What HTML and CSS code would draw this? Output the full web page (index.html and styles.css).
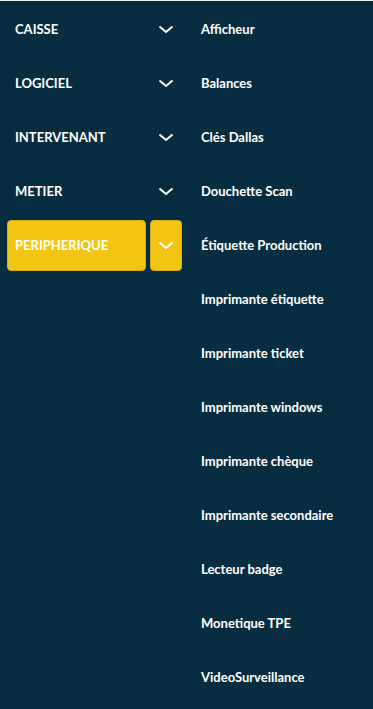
FILE: index.html
```html
<!DOCTYPE html>
<html lang="fr">
<head>
    <meta charset="UTF-8">
    <meta name="viewport" content="width=device-width, initial-scale=1.0">
    <title>Paramètres</title>
    <link rel="stylesheet" href="styles.css">
</head>
<body>

    <div class="menu">
        <ul class="categories">
            <li class="category">
                <span class="category-label">CAISSE</span>
                <span class="toggle"><svg width="16" height="9" viewBox="0 0 16 9"><polyline points="1.5,1.5 8,7 14.5,1.5" fill="none" stroke="#fff" stroke-width="2"/></svg></span>
            </li>
            <li class="category">
                <span class="category-label">LOGICIEL</span>
                <span class="toggle"><svg width="16" height="9" viewBox="0 0 16 9"><polyline points="1.5,1.5 8,7 14.5,1.5" fill="none" stroke="#fff" stroke-width="2"/></svg></span>
            </li>
            <li class="category">
                <span class="category-label">INTERVENANT</span>
                <span class="toggle"><svg width="16" height="9" viewBox="0 0 16 9"><polyline points="1.5,1.5 8,7 14.5,1.5" fill="none" stroke="#fff" stroke-width="2"/></svg></span>
            </li>
            <li class="category">
                <span class="category-label">METIER</span>
                <span class="toggle"><svg width="16" height="9" viewBox="0 0 16 9"><polyline points="1.5,1.5 8,7 14.5,1.5" fill="none" stroke="#fff" stroke-width="2"/></svg></span>
            </li>
            <li class="category active">
                <span class="category-label">PERIPHERIQUE</span>
                <span class="toggle"><svg width="16" height="9" viewBox="0 0 16 9"><polyline points="1.5,1.5 8,7 14.5,1.5" fill="none" stroke="#fff" stroke-width="2"/></svg></span>
            </li>
        </ul>

        <ul class="items">
            <li class="item">Afficheur</li>
            <li class="item">Balances</li>
            <li class="item">Clés Dallas</li>
            <li class="item">Douchette Scan</li>
            <li class="item">Étiquette Production</li>
            <li class="item">Imprimante étiquette</li>
            <li class="item">Imprimante ticket</li>
            <li class="item">Imprimante windows</li>
            <li class="item">Imprimante chèque</li>
            <li class="item">Imprimante secondaire</li>
            <li class="item">Lecteur badge</li>
            <li class="item">Monetique TPE</li>
            <li class="item">VideoSurveillance</li>
        </ul>
    </div>

</body>
</html>
```

FILE: styles.css
```css
/* Reset */
* {
    margin: 0;
    padding: 0;
    box-sizing: border-box;
}

body {
    font-family: 'Lato', 'Liberation Sans', sans-serif;
    font-weight: bold;
    font-size: 13px;
    color: #ffffff;
    background-color: #082d40;
    border-top: 1px solid #eef2f4;
    min-height: 100vh;
}

/* Conteneur principal */
.menu {
    display: flex;
    padding-top: 3px;
}

ul {
    list-style: none;
}

/* Colonne des catégories */
.categories {
    width: 182px;
    padding-left: 7px;
}

.category {
    display: flex;
    gap: 4px;
    height: 51px;
    margin-bottom: 3px;
}

.category-label {
    flex: 1;
    display: flex;
    align-items: center;
    padding-left: 7px;
    padding-bottom: 2px;
    border-radius: 4px;
    border: 1px solid transparent;
}

.toggle {
    width: 32px;
    display: flex;
    align-items: center;
    justify-content: center;
    padding-bottom: 1px;
    border-radius: 4px;
    border: 1px solid transparent;
}

.category.active .category-label,
.category.active .toggle {
    background-color: #f2c413;
    border-color: #d9ae12;
}

/* Colonne des périphériques */
.items {
    padding-left: 19px;
}

.item {
    height: 51px;
    margin-bottom: 3px;
    padding-bottom: 2px;
    display: flex;
    align-items: center;
}
```
